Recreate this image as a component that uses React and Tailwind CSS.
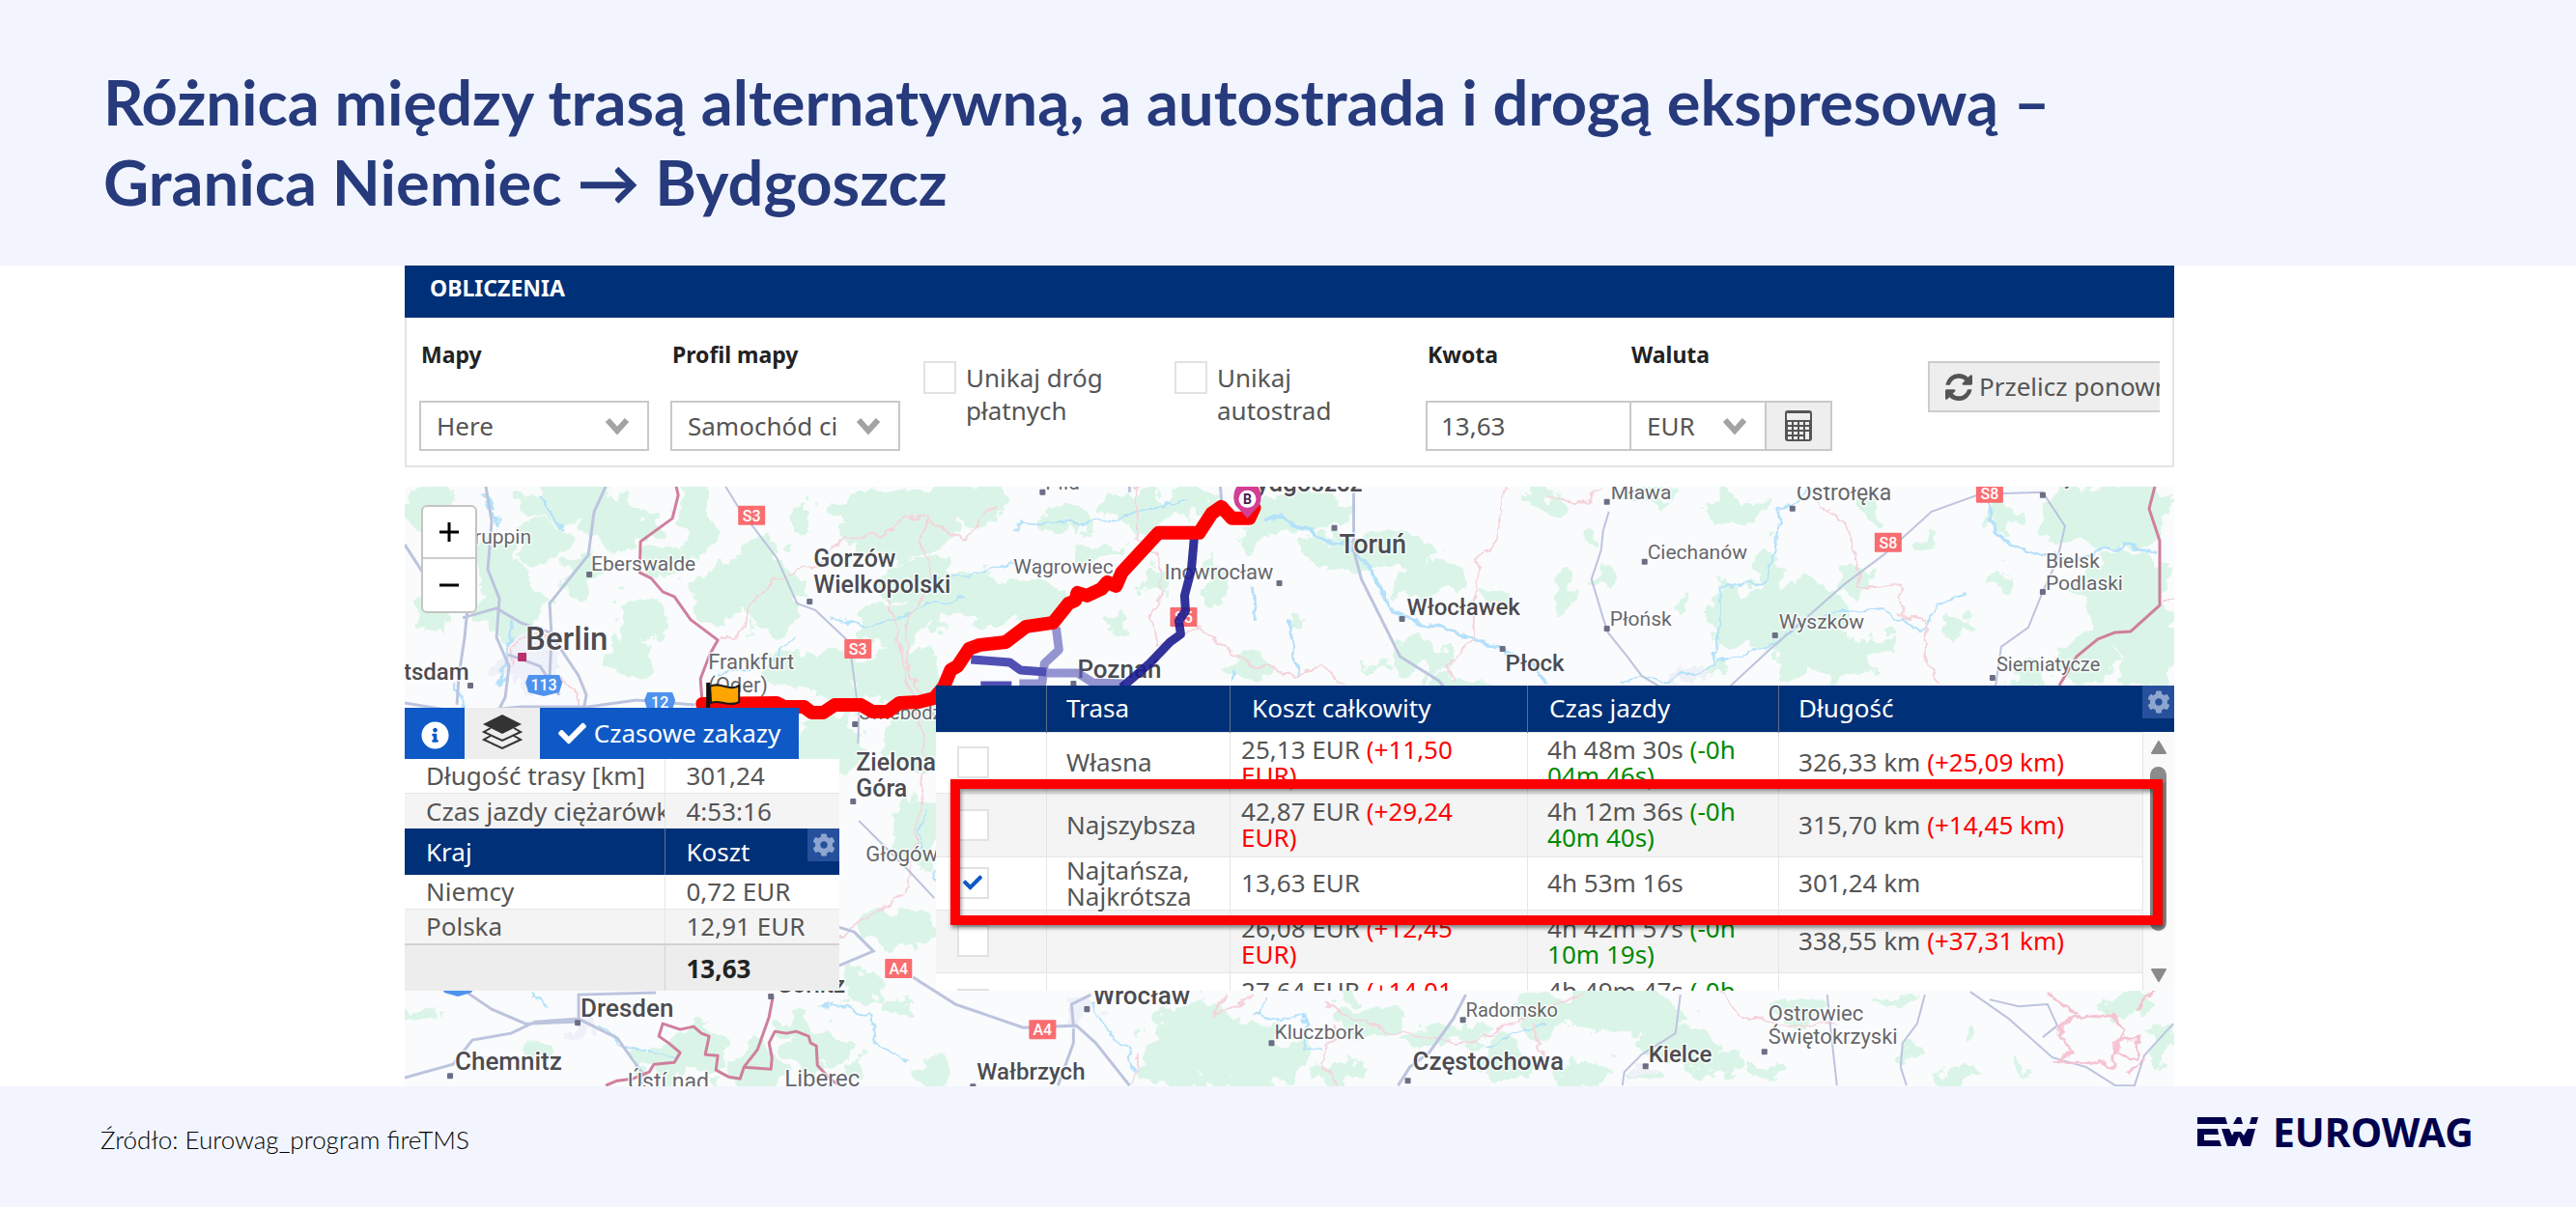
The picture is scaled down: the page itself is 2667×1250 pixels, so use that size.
import React, { useState } from 'react';
import { FaCheck, FaCog, FaInfoCircle } from 'react-icons/fa';

const routes = [
  { id: 'own', name: 'Własna', cost: '25,13 EUR', costDiff: '(+11,50 EUR)', time: '4h 48m 30s', timeDiff: '(-0h 04m 46s)', length: '326,33 km', lengthDiff: '(+25,09 km)', height: 'h-[63px]' },
  { id: 'fastest', name: 'Najszybsza', cost: '42,87 EUR', costDiff: '(+29,24 EUR)', time: '4h 12m 36s', timeDiff: '(-0h 40m 40s)', length: '315,70 km', lengthDiff: '(+14,45 km)', height: 'h-[66px]' },
  { id: 'cheapest', name: 'Najtańsza, Najkrótsza', cost: '13,63 EUR', time: '4h 53m 16s', length: '301,24 km', height: 'h-[54px]' },
  { id: 'alt1', name: '', cost: '26,08 EUR', costDiff: '(+12,45 EUR)', time: '4h 42m 57s', timeDiff: '(-0h 10m 19s)', length: '338,55 km', lengthDiff: '(+37,31 km)', height: 'h-[65px]' },
  { id: 'alt2', name: '', cost: '27,64 EUR', costDiff: '(+14,01 EUR)', time: '4h 49m 47s', timeDiff: '(-0h 03m 29s)', length: '', height: 'h-[66px]' },
];

// x, y of the baseline, font size, text
const bigCities = [
  [545, 673, 33, 'Berlin'],
  [843, 587, 25, 'Gorzów'],
  [843, 614, 25, 'Wielkopolski'],
  [419, 704, 24, 'tsdam'],
  [887, 798, 25, 'Zielona'],
  [887, 825, 25, 'Góra'],
  [602, 1053, 26, 'Dresden'],
  [472, 1108, 26, 'Chemnitz'],
  [805, 1028, 24, 'Görlitz'],
  [1285, 509, 26, 'Bydgoszcz'],
  [1387, 573, 27, 'Toruń'],
  [1457, 637, 24, 'Włocławek'],
  [1559, 695, 24, 'Płock'],
  [1116, 702, 26, 'Poznań'],
  [1132, 1040, 26, 'Wrocław'],
  [1012, 1118, 24, 'Wałbrzych'],
  [1463, 1108, 26, 'Częstochowa'],
  [1707, 1100, 24, 'Kielce'],
];

const smallCities = [
  [492, 563, 21, 'ruppin'],
  [613, 591, 21, 'Eberswalde'],
  [734, 693, 22, 'Frankfurt'],
  [734, 717, 22, '(Oder)'],
  [890, 745, 20, 'Świebodzin'],
  [897, 892, 22, 'Głogów'],
  [651, 1128, 23, 'Ústí nad'],
  [813, 1125, 24, 'Liberec'],
  [1083, 507, 21, 'Piła'],
  [1050, 594, 21, 'Wągrowiec'],
  [1206, 600, 22, 'Inowrocław'],
  [1668, 517, 21, 'Mława'],
  [1860, 518, 23, 'Ostrołęka'],
  [1706, 579, 21, 'Ciechanów'],
  [1667, 648, 21, 'Płońsk'],
  [1842, 651, 21, 'Wyszków'],
  [2118, 588, 21, 'Bielsk'],
  [2118, 611, 21, 'Podlaski'],
  [2067, 695, 20, 'Siemiatycze'],
  [2100, 501, 22, 'Białystok'],
  [1320, 1076, 21, 'Kluczbork'],
  [1518, 1053, 20, 'Radomsko'],
  [1831, 1057, 22, 'Ostrowiec'],
  [1831, 1081, 22, 'Świętokrzyski'],
];

const dots = [
  [611, 595], [839, 623], [488, 710], [886, 750], [884, 830], [599, 1059], [467, 1114], [799, 1032],
  [1080, 510], [1382, 547], [1325, 604], [1452, 641], [1556, 672], [1112, 708], [1664, 520], [1856, 527],
  [1703, 582], [1664, 651], [1838, 658], [2115, 613], [2063, 702], [2115, 513], [1126, 1045], [1317, 1080],
  [1515, 1056], [1458, 1119], [1827, 1089], [1704, 1104], [1008, 1125],
];

const badges = [
  [779, 534, 'S3'], [889, 672, 'S3'], [1226, 639, 'S5'], [1955, 562, 'S8'], [2060, 511, 'S8'],
  [931, 1003, 'A4'], [1080, 1066, 'A4'],
];

// cx, cy, rx, ry
const forests = [
  [450, 530, 34, 26], [530, 620, 34, 40], [560, 560, 34, 22], [585, 520, 50, 18], [640, 545, 40, 24], [665, 640, 34, 24],
  [690, 580, 24, 18], [720, 540, 18, 38], [650, 680, 28, 18], [600, 600, 18, 24], [510, 580, 18, 14], [445, 640, 18, 14],
  [790, 600, 38, 38], [830, 540, 16, 20], [745, 610, 24, 34], [800, 640, 34, 20], [880, 520, 26, 10], [930, 540, 60, 40],
  [1000, 520, 46, 24], [960, 600, 50, 22], [1010, 620, 70, 24], [930, 645, 44, 24], [860, 700, 34, 26], [930, 700, 46, 32],
  [820, 690, 30, 14], [960, 760, 44, 34], [860, 770, 34, 34], [950, 860, 24, 32], [930, 960, 38, 22], [890, 1020, 26, 18],
  [1060, 625, 46, 20], [1100, 540, 26, 10], [1140, 570, 26, 12], [1180, 530, 40, 16], [1230, 520, 34, 16], [1340, 535, 56, 22],
  [1420, 572, 70, 18], [1480, 600, 40, 18], [1260, 600, 8, 30], [1350, 514, 34, 12], [1300, 560, 16, 8], [1470, 680, 36, 18],
  [1510, 710, 34, 14], [1350, 640, 10, 6], [1420, 690, 14, 6], [1550, 620, 14, 8], [1600, 520, 24, 8], [1640, 560, 8, 10],
  [1620, 610, 8, 20], [1160, 650, 12, 8], [1290, 690, 24, 8], [1200, 600, 10, 10], [1700, 516, 30, 8], [1800, 530, 36, 14],
  [1830, 590, 12, 24], [1800, 640, 32, 34], [1860, 640, 56, 38], [1890, 680, 48, 24], [1920, 600, 18, 16], [1940, 530, 14, 16],
  [1990, 560, 8, 10], [2020, 650, 16, 10], [2070, 540, 14, 16], [2165, 535, 52, 32], [2210, 530, 40, 34], [2195, 620, 46, 50],
  [2160, 680, 30, 26], [2225, 680, 34, 34], [2070, 600, 12, 10], [2100, 700, 20, 12], [1940, 670, 20, 8], [1780, 700, 10, 8],
  [1660, 600, 12, 6], [1740, 630, 10, 6], [440, 1050, 16, 8], [560, 1090, 20, 10], [680, 1100, 34, 14], [720, 1085, 34, 22],
  [780, 1110, 36, 20], [850, 1085, 34, 22], [820, 1060, 18, 10], [890, 1110, 14, 12], [930, 1040, 24, 12], [970, 1110, 20, 14],
  [1240, 1080, 54, 40], [1290, 1095, 60, 32], [1220, 1110, 36, 20], [1380, 1110, 24, 12], [1420, 1060, 30, 12], [1400, 1035, 18, 8],
  [1500, 1070, 44, 10], [1560, 1100, 32, 18], [1600, 1050, 28, 24], [1680, 1045, 70, 24], [1740, 1080, 44, 20], [1640, 1110, 28, 18],
  [1780, 1100, 26, 14], [1830, 1110, 24, 8], [1860, 1050, 22, 10], [1700, 1116, 20, 8], [2040, 1065, 8, 12], [2020, 1112, 20, 6],
  [2100, 1110, 6, 12], [2200, 1040, 22, 14], [2240, 1080, 14, 18], [1970, 1090, 10, 6], [1960, 1035, 16, 6],
];

function MapLayer() {
  return (
    <svg
      className="absolute inset-0 h-full w-full"
      viewBox="420 504 1831 621"
      preserveAspectRatio="xMidYMid slice"
      fontFamily="Roboto, 'Noto Sans', sans-serif"
      aria-label="Mapa trasy"
    >
      <defs>
        <filter id="rough" x="-5%" y="-5%" width="110%" height="110%">
          <feTurbulence type="fractalNoise" baseFrequency="0.035" numOctaves="4" seed="7" />
          <feDisplacementMap in="SourceGraphic" scale="48" xChannelSelector="R" yChannelSelector="G" />
        </filter>
        <filter id="wobble" x="-5%" y="-5%" width="110%" height="110%">
          <feTurbulence type="fractalNoise" baseFrequency="0.06" numOctaves="3" seed="3" />
          <feDisplacementMap in="SourceGraphic" scale="14" xChannelSelector="R" yChannelSelector="G" />
        </filter>
      </defs>

      <rect x="420" y="504" width="1831" height="621" fill="#fafbfd" />
      <g fill="#daf5e7" filter="url(#rough)">
        {forests.map(([cx, cy, rx, ry], i) => (
          <ellipse key={i} cx={cx} cy={cy} rx={rx} ry={ry} />
        ))}
      </g>

      {/* built-up areas */}
      <g fill="#eff1f8" filter="url(#rough)">
        <ellipse cx="550" cy="685" rx="32" ry="30" />
        <ellipse cx="1120" cy="1050" rx="18" ry="16" />
        <ellipse cx="610" cy="1065" rx="20" ry="8" />
        <ellipse cx="1750" cy="700" rx="20" ry="10" />
        <ellipse cx="1700" cy="1110" rx="12" ry="10" />
      </g>

      {/* rivers */}
      <g fill="none" stroke="#b4e1fa" strokeWidth="2" filter="url(#wobble)">
        <path d="M744 700L770 692L800 682L824 660M860 640L900 650L950 630L1000 618" />
        <path d="M1050 550L1060 540L1120 545L1180 530L1230 518M960 600L1010 595L1060 580" />
        <path d="M1310 535L1340 540L1368 560L1400 565L1420 590L1435 620L1452 640L1490 650L1510 655L1556 672L1590 690L1600 708" strokeWidth="4" />
        <path d="M1298 608L1300 645M1335 640L1342 680L1344 700M1275 708L1280 695" strokeWidth="3" />
        <path d="M1680 710L1700 700L1730 705L1770 690L1780 660L1782 610L1830 600L1838 570L1842 530L1880 505" />
        <path d="M1775 685L1830 670L1860 650L1900 635L1950 630L1990 655L2010 625L2035 615" />
        <path d="M2060 520L2065 550L2090 570L2150 580L2175 570L2200 565L2235 575" strokeWidth="3" />
        <path d="M500 510L520 545M560 515L585 550M527 700L515 712L530 670L532 640M470 712L485 740" strokeWidth="3" />
        <path d="M550 1030L570 1045M620 1060L650 1085L700 1095M850 1040L900 1050L910 1085L940 1100" />
        <path d="M1130 1040L1150 1070L1170 1085L1172 1110M1310 1032L1300 1050L1330 1060L1350 1050L1352 1085L1370 1090M1540 1085L1600 1060" />
        <path d="M970 990L975 960L970 900M950 880L960 840" />
      </g>

      {/* provinces */}
      <g fill="none" stroke="#f5d3da" strokeWidth="2" filter="url(#wobble)">
        <path d="M530 690L535 665L560 655L580 665M580 700L600 720L600 745" />
        <path d="M745 660L765 660L775 630L800 600L850 585L870 560L925 550L940 535L960 535L955 560L965 600L940 640L940 690L960 730L980 760" />
        <path d="M960 540L1000 560L1030 520M1178 504L1175 560L1200 570L1205 610L1190 640L1200 670L1240 650L1290 685L1340 700L1370 690L1390 710" />
        <path d="M1600 515L1640 520L1660 508M1560 504L1550 560L1530 580L1525 660L1500 690L1505 704" />
        <path d="M1880 520L1910 540L1925 590L1925 610L1965 605L1970 640L1995 640L1995 690L2010 708M2235 620L2250 620" />
        <path d="M920 620L950 740L960 780L950 860L940 920L900 950L870 970" />
        <path d="M1270 1030L1260 1050L1300 1030M1180 1090L1170 1124M1370 1040L1400 1055L1440 1070L1520 1080L1600 1045L1640 1030" />
        <path d="M1780 1020L1800 1050L1840 1060L1900 1060M1385 1060L1370 1100L1385 1124M1590 1060L1600 1100" />
      </g>

      {/* main roads */}
      <g fill="none" stroke="#bcc4de" strokeWidth="3">
        <path d="M504 504L510 540L506 590L518 620L515 660L528 690L524 722L495 780" />
        <path d="M628 504L616 530L610 575L590 600L570 625L572 660L570 700M480 640L515 630L540 645L570 655L600 700L608 720L604 740" />
        <path d="M420 564L440 595L450 620L485 630L482 660L476 700L474 730M527 678L560 690L580 720M420 728L480 738L540 732L610 732L660 725L720 730" />
        <path d="M752 504L765 525L780 545L805 578L826 625L845 632L880 665L890 740L889 770" strokeWidth="2" />
        <path d="M1264 504L1266 530M1402 504L1402 570L1410 600L1430 640L1450 680L1490 705L1496 712" />
        <path d="M1666 530L1660 550L1658 570L1648 600L1660 640L1665 655L1685 680L1700 700L1720 712" strokeWidth="2" />
        <path d="M1790 712L1830 675L1870 640L1910 605L1950 575L2000 530L2050 512L2115 510L2138 545L2130 580L2115 613L2100 650L2072 670L2066 712" strokeWidth="2" />
        <path d="M1170 504L1170 510M960 730L980 760" />
        <path d="M420 1116L470 1102L490 1077L530 1070L555 1058L600 1055L640 1075L665 1110L665 1124M485 1028L510 1045L545 1060L600 1058L600 1030L680 1028" />
        <path d="M869 1000L905 985L885 965L869 960M946 1012L990 1040L1060 1064L1115 1062L1135 1080L1170 1124M1112 1062L1110 1040L1130 1030M1112 1065L1112 1080L1096 1124" />
        <path d="M1518 1030L1505 1055L1480 1090L1460 1105L1448 1124" />
        <path d="M1740 1030L1735 1070L1700 1092L1682 1110L1680 1124M1892 1030L1896 1070L1902 1124M1993 1030L1985 1060L1970 1080L1968 1105L1974 1124M2040 1027L2080 1055L2125 1095L2160 1105L2190 1124L2210 1124L2220 1093L2250 1060M2060 1035L2090 1042L2120 1040L2130 1062L2115 1074" strokeWidth="2" />
        <path d="M890 850L940 900L968 930" strokeWidth="2" />
      </g>

      {/* state borders */}
      <g fill="none" stroke="#cf7f9c" strokeWidth="3" strokeLinejoin="round">
        <path d="M701 504L703 513L697 537L664 561L663 593L675 599L687 613L699 618L716 642L744 663L736 677L726 703L728 730" />
        <path d="M2231 504L2225 527L2236 560L2236 627L2206 654L2190 655L2172 662L2150 680L2132 710" />
        <path d="M801 1032L797 1053L785 1087L771 1105L767 1117L755 1115L742 1108L744 1093L731 1092L735 1073L727 1070L719 1063L705 1066L687 1060L683 1073L693 1080L705 1090L699 1100L678 1102L673 1110L656 1117L640 1119L628 1124" />
        <path d="M771 1105L785 1106L799 1107L800 1095L797 1080L803 1068L815 1070L825 1068L838 1073L840 1080L846 1083L847 1103L860 1117L870 1124" />
      </g>
      <g fill="none" stroke="#f5c3d1" strokeWidth="3" filter="url(#wobble)">
        <path d="M2120 1030L2150 1050L2130 1070L2145 1090L2130 1100L2160 1100L2190 1105L2190 1080L2215 1075L2210 1095L2190 1090L2200 1065L2180 1050L2140 1055M2210 1045L2235 1025M2205 1115L2220 1095" />
      </g>

      {badges.map(([x, y, label]) => (
        <g key={`${x}-${label}`}>
          <rect x={x - 14} y={y - 10} width="28" height="20" rx="1" fill="#f96d70" />
          <text x={x} y={y + 6} fontSize="16" fontWeight="500" fill="#fff" textAnchor="middle">{label}</text>
        </g>
      ))}
      <g fill="#4f92ee">
        <path d="M548 699H580L583 707L580 717L564 721L548 717L545 707Z" />
        <path d="M671 717H697L700 725L697 735L684 739L671 735L668 725Z" />
        <path d="M458 1022H492L489 1028L475 1032L461 1028Z" />
      </g>
      <g fontSize="16" fontWeight="500" fill="#fff" textAnchor="middle">
        <text x="564" y="715">113</text>
        <text x="684" y="733">12</text>
      </g>

      <g fill="#6b6f85">
        {dots.map(([x, y]) => (
          <rect key={`${x}-${y}`} x={x - 3} y={y - 3} width="6" height="6" rx="1" />
        ))}
      </g>
      <rect x="537" y="676" width="9" height="9" rx="1" fill="#b8336a" />

      <g stroke="#fff" strokeWidth="3" strokeOpacity="0.8" paintOrder="stroke" strokeLinejoin="round">
        <g fill="#4c4c52" fontWeight="500">
          {bigCities.map(([x, y, size, name]) => (
            <text key={name} x={x} y={y} fontSize={size}>{name}</text>
          ))}
        </g>
        <g fill="#67676c">
          {smallCities.map(([x, y, size, name]) => (
            <text key={name} x={x} y={y} fontSize={size}>{name}</text>
          ))}
        </g>
      </g>

      {/* calculated routes */}
      <g fill="none" strokeLinejoin="round">
        <path d="M1094 650L1097 673L1082 687L1079 712M1082 697L1116 697L1132 707L1164 708M1056 708H1082" stroke="#5c5cb8" strokeOpacity="0.65" strokeWidth="9" />
        <path d="M1006 683L1046 686L1057 694L1084 696M1016 710H1048" stroke="#5050b4" strokeWidth="9" />
        <path d="M1237 556L1234 590L1227 617L1228 633L1221 643L1223 657L1212 665L1191 687L1162 712" stroke="#1c1c90" strokeOpacity="0.9" strokeWidth="9" />
        <path
          d="M728 729L805 728L813 732L833 732L841 738L853 738L865 730L892 730L904 737L920 737L932 728L952 727L968 723L978 711L985 694L992 690L1004 672L1015 668L1042 665L1063 649L1091 645L1107 625L1114 622L1116 614L1126 617L1141 610L1147 603L1156 607L1162 593L1200 552L1242 552L1255 532L1265 525L1276 537L1294 537L1299 526"
          stroke="#ff0000"
          strokeWidth="14"
          strokeLinecap="round"
        />
      </g>

      {/* start flag */}
      <path d="M736 711C746 705 756 717 766 710V727C756 733 746 724 737 728Z" fill="#ffa500" stroke="#1a1a1a" strokeWidth="2" />
      <path d="M734 707V736" stroke="#111" strokeWidth="4" />

      {/* destination pin */}
      <path d="M1292 537L1280 524C1274 512 1281 498 1292 498C1303 498 1310 512 1304 524Z" fill="#d23f94" />
      <circle cx="1292" cy="517" r="9" fill="#fff" />
      <text x="1292" y="522" fontSize="14" fontWeight="700" fill="#4a1b52" textAnchor="middle">B</text>
    </svg>
  );
}

function Chevron() {
  return (
    <svg viewBox="0 0 26 18" className="pointer-events-none absolute right-5 top-1/2 h-[18px] w-[26px] -translate-y-1/2" aria-hidden="true">
      <path d="M3 3L13 14L23 3" fill="none" stroke="#a3a3a3" strokeWidth="6" />
    </svg>
  );
}

function SelectField({ id, label, options, width, clip }) {
  return (
    <div className={`flex flex-col ${width}`}>
      <label htmlFor={id} className="pl-[2px] text-[23px] leading-8 font-bold text-[#222]">{label}</label>
      <div className="relative mt-8">
        <select id={id} className={`block h-[52px] w-full appearance-none border-2 border-[#c9c9c9] bg-white pl-4 text-[26px] text-[#555] ${clip}`}>
          {options.map((o) => <option key={o}>{o}</option>)}
        </select>
        <Chevron />
      </div>
    </div>
  );
}

function CheckField({ id, label }) {
  return (
    <div className="mt-[23px] flex w-[216px] gap-[10px]">
      <input id={id} type="checkbox" className="h-[34px] w-[34px] shrink-0 appearance-none border-2 border-[#e2e2e2] bg-white" />
      <label htmlFor={id} className="w-[150px] text-[26px] leading-[34px] text-[#555]">{label}</label>
    </div>
  );
}

function CalculatorIcon() {
  return (
    <svg viewBox="0 0 30 34" className="h-[34px] w-[30px]" aria-hidden="true">
      <rect x="1" y="1" width="28" height="32" rx="3" fill="#555" />
      <rect x="3" y="4" width="24" height="7" fill="#eee" />
      {[13, 18, 23, 28].map((y) => (
        <g key={y} fill="#eee">
          <rect x="4" y={y} width="4" height="3" />
          <rect x="10" y={y} width="4" height="3" />
          <rect x="16" y={y} width="4" height="3" />
          {y < 20 && <rect x="22" y={y} width="4" height="3" />}
        </g>
      ))}
      <rect x="22" y="23" width="4" height="8" fill="#eee" />
    </svg>
  );
}

function RefreshIcon() {
  return (
    <svg viewBox="0 0 1536 1536" className="h-7 w-7 shrink-0" fill="currentColor" aria-hidden="true">
      <path d="M1511 928q0 5-1 7-64 268-268 434.500t-478 166.500q-146 0-282.500-55t-243.500-157l-129 129q-19 19-45 19t-45-19-19-45v-448q0-26 19-45t45-19h448q26 0 45 19t19 45-19 45l-137 137q71 66 161 102t187 36q134 0 250-65t186-179q11-17 53-117 8-23 30-23h192q13 0 22.500 9.500t9.500 22.500zM1536 128v448q0 26-19 45t-45 19h-448q-26 0-45-19t-19-45 19-45l138-138q-148-137-349-137-134 0-250 65t-186 179q-11 17-53 117-8 23-30 23h-199q-13 0-22.500-9.500t-9.500-22.500v-7q65-268 270-434.500t480-166.500q146 0 284 55.500t245 156.500l130-129q19-19 45-19t45 19 19 45z" />
    </svg>
  );
}

function CalculationForm() {
  const [amount, setAmount] = useState('13,63');
  return (
    <form className="flex h-[155px] overflow-hidden border-2 border-t-0 border-[#e4e4e4] pt-[22px] pr-[13px] pl-[13px]">
      <div className="flex gap-[22px]">
        <SelectField id="maps" label="Mapy" options={['Here']} width="w-[238px]" clip="pr-12" />
        <SelectField id="profile" label="Profil mapy" options={['Samochód ciężarowy']} width="w-[238px]" clip="pr-16" />
      </div>
      <div className="ml-6 flex gap-11">
        <CheckField id="tolls" label="Unikaj dróg płatnych" />
        <CheckField id="motorways" label="Unikaj autostrad" />
      </div>
      <div className="ml-11 flex">
        <div className="w-[213px]">
          <label htmlFor="amount" className="block pl-[2px] text-[23px] leading-8 font-bold text-[#222]">Kwota</label>
          <input
            id="amount"
            value={amount}
            onChange={(e) => setAmount(e.target.value)}
            className="mt-8 block h-[52px] w-full border-2 border-[#c9c9c9] bg-white pl-[14px] text-[26px] text-[#555]"
          />
        </div>
        <div className="w-[140px]">
          <label htmlFor="currency" className="block text-[23px] leading-8 font-bold text-[#222]">Waluta</label>
          <div className="relative mt-8">
            <select id="currency" className="block h-[52px] w-full appearance-none border-2 border-l-0 border-[#c9c9c9] bg-white pl-4 text-[26px] text-[#555]">
              <option>EUR</option>
            </select>
            <Chevron />
          </div>
        </div>
        <button type="button" aria-label="Kalkulator" className="mt-16 flex h-[52px] w-[68px] items-center justify-center border-2 border-l-0 border-[#c9c9c9] bg-[#eee]">
          <CalculatorIcon />
        </button>
      </div>
      <div className="ml-auto w-[240px] overflow-hidden">
        <button type="button" className="mt-[23px] flex h-[53px] w-[270px] items-center gap-[7px] border-2 border-[#ccc] bg-[#eee] pl-4 text-[26px] whitespace-nowrap text-[#555]">
          <RefreshIcon />
          Przelicz ponownie
        </button>
      </div>
    </form>
  );
}

function GearButton() {
  return (
    <button type="button" aria-label="Ustawienia tabeli" className="flex h-[34px] w-[33px] items-center justify-center bg-[#26509c] text-[#8ea6cf]">
      <FaCog size={24} />
    </button>
  );
}

function SummaryPanel() {
  return (
    <div className="w-[450px] shrink-0 text-[26px] text-[#555]">
      <div className="flex h-[53px]">
        <button type="button" aria-label="Informacje" className="flex w-[62px] items-center justify-center bg-[#0f59c6] pt-1 text-white">
          <FaInfoCircle size={29} />
        </button>
        <button type="button" aria-label="Warstwy" className="flex w-[78px] items-center justify-center bg-[#eee] pb-1">
          <svg viewBox="0 0 42 38" className="h-[38px] w-[42px]">
            <path d="M21 1L41 11L21 21L1 11Z" fill="#333" />
            <path d="M9 15L2 19L21 28L40 19L33 15M9 23L2 27L21 36L40 27L33 23" fill="none" stroke="#333" strokeWidth="2" />
          </svg>
        </button>
        <button type="button" className="flex w-[268px] items-center justify-center gap-2 bg-[#0f59c6] text-white">
          <FaCheck size={29} />
          Czasowe zakazy
        </button>
      </div>
      <table className="w-full table-fixed border-collapse leading-8 whitespace-nowrap">
        <colgroup>
          <col className="w-[269px]" />
          <col />
        </colgroup>
        <tbody>
          <tr className="h-[35px] border-b border-[#e6e6e6] bg-white">
            <td className="overflow-hidden border-r border-[#e6e6e6] p-0 pl-[22px]">Długość trasy [km]</td>
            <td className="p-0 pl-[22px]">301,24</td>
          </tr>
          <tr className="h-[37px] bg-[#f4f4f4]">
            <td className="overflow-hidden border-r border-[#e6e6e6] p-0 pl-[22px]">Czas jazdy ciężarówką</td>
            <td className="p-0 pl-[22px]">4:53:16</td>
          </tr>
        </tbody>
      </table>
      <table className="w-full table-fixed border-collapse leading-8 whitespace-nowrap">
        <colgroup>
          <col className="w-[269px]" />
          <col />
        </colgroup>
        <thead>
          <tr className="h-12 bg-[#003077] text-left text-white">
            <th className="border-r border-[#5f6f8d] p-0 pl-[22px] font-normal">Kraj</th>
            <th className="relative p-0 pl-[22px] font-normal">
              Koszt
              <span className="absolute top-0 right-0"><GearButton /></span>
            </th>
          </tr>
        </thead>
        <tbody>
          <tr className="h-[35px] border-b border-[#e6e6e6] bg-white">
            <td className="border-r border-[#e6e6e6] p-0 pl-[22px]">Niemcy</td>
            <td className="p-0 pl-[22px]">0,72 EUR</td>
          </tr>
          <tr className="h-[37px] bg-[#f4f4f4]">
            <td className="border-r border-[#e6e6e6] p-0 pl-[22px]">Polska</td>
            <td className="p-0 pl-[22px]">12,91 EUR</td>
          </tr>
        </tbody>
        <tfoot>
          <tr className="h-12 border-t-2 border-[#d2d2d2] bg-[#ededed]">
            <td className="border-r border-[#d2d2d2] p-0" />
            <td className="p-0 pl-[22px] font-bold text-[#222]">13,63</td>
          </tr>
        </tfoot>
      </table>
    </div>
  );
}

function RoutesPanel() {
  const [selected, setSelected] = useState('cheapest');
  return (
    <div className="relative w-[70%]">
      <div className="h-[316px] overflow-hidden bg-[#fafafa]">
        <table className="w-full table-fixed border-collapse text-[26px] leading-[27px] text-[#555]">
          <colgroup>
            <col className="w-[115px]" />
            <col className="w-[190px]" />
            <col className="w-[308px]" />
            <col className="w-[260px]" />
            <col />
            <col className="w-[33px]" />
          </colgroup>
          <thead>
            <tr className="h-12 bg-[#003077] text-left text-white">
              <th className="border-r border-[#5f6f8d] p-0" aria-label="Wybór" />
              <th className="border-r border-[#5f6f8d] p-0 pl-5 font-normal">Trasa</th>
              <th className="border-r border-[#5f6f8d] p-0 pl-[22px] font-normal">Koszt całkowity</th>
              <th className="border-r border-[#5f6f8d] p-0 pl-[22px] font-normal">Czas jazdy</th>
              <th className="p-0 pl-5 font-normal">Długość</th>
              <th className="p-0 align-top"><GearButton /></th>
            </tr>
          </thead>
          <tbody>
            {routes.map((route, i) => (
              <tr key={route.id} className={`${route.height} ${i % 2 ? 'bg-[#f4f4f4]' : 'bg-white'}`}>
                <td className="border border-l-0 border-[#e6e6e6] p-0 pl-[22px]">
                  <span className="relative block h-[33px] w-[33px]">
                    <input
                      type="checkbox"
                      aria-label={route.name || route.length || route.cost}
                      checked={selected === route.id}
                      onChange={() => setSelected(route.id)}
                      className="block h-[33px] w-[33px] appearance-none border-2 border-[#e2e2e2] bg-white"
                    />
                    {selected === route.id && (
                      <FaCheck size={20} className="pointer-events-none absolute top-[6px] left-[6px] text-[#0f59c6]" />
                    )}
                  </span>
                </td>
                <td className="border border-[#e6e6e6] p-0 pl-5">{route.name}</td>
                <td className="border border-[#e6e6e6] p-0 pr-16 pl-[11px]">
                  {route.cost} <span className="text-[#ff0000]">{route.costDiff}</span>
                </td>
                <td className="border border-[#e6e6e6] p-0 pr-8 pl-5">
                  {route.time} <span className="text-[#008a00]">{route.timeDiff}</span>
                </td>
                <td className="border border-[#e6e6e6] p-0 pl-5">
                  {route.length} <span className="text-[#ff0000]">{route.lengthDiff}</span>
                </td>
                <td className="bg-[#fafafa] p-0" />
              </tr>
            ))}
          </tbody>
        </table>
      </div>

      {/* scroll bar of the list */}
      <div className="absolute top-12 right-0 flex h-[268px] w-[33px] flex-col items-center pt-2 pb-2" aria-hidden="true">
        <svg viewBox="0 0 18 16" className="h-4 w-[18px]"><path d="M9 2L16 14H2Z" fill="#8b8b8b" stroke="#8b8b8b" strokeWidth="2" strokeLinejoin="round" /></svg>
        <div className="mt-3 h-[170px] w-[17px] rounded-full bg-[#8b8b8b]" />
        <svg viewBox="0 0 18 16" className="mt-auto h-4 w-[18px]"><path d="M9 14L2 2H16Z" fill="#8b8b8b" stroke="#8b8b8b" strokeWidth="2" strokeLinejoin="round" /></svg>
      </div>

      {/* highlighted rows */}
      <div className="pointer-events-none absolute top-[97px] right-3 left-[15px] h-[151px] border-10 border-[#ff0000] shadow-[1px_3px_4px_rgba(0,0,0,0.45),inset_1px_3px_4px_rgba(0,0,0,0.45)]" />
    </div>
  );
}

function Logo() {
  return (
    <div className="flex items-center gap-[15px] text-[#00004d]">
      <svg viewBox="0 0 63 30" className="h-[30px] w-[63px]" fill="currentColor" aria-hidden="true">
        <path d="M0 0H29L31 7H0Z" />
        <path d="M41 0H45L47 7H37Z" />
        <path d="M56 0H63L61 7H54Z" />
        <path d="M0 12H21L22 18H7V24H23L25 30H0Z" />
        <path d="M25 12H33L36 19L38 15H45L48 19L52 12H60L55 30H47L43 20L39 30H31Z" />
      </svg>
      <span className="text-[41px] leading-[42px] font-bold">EUROWAG</span>
    </div>
  );
}

export default function App() {
  return (
    <div className="min-h-screen bg-white font-['Noto_Sans','Open_Sans',sans-serif]">
      <header className="h-[275px] bg-[#f2f5fd] px-[107px] pt-16">
        <h1 className="max-w-[2100px] font-['Lato','Noto_Sans',sans-serif] text-[65px] leading-[83px] font-bold text-[#263a7c]">
          Różnica między trasą alternatywną, a autostrada i drogą ekspresową – Granica Niemiec → Bydgoszcz
        </h1>
      </header>

      <main className="pr-104 pl-[419px]">
        <h2 className="h-[54px] bg-[#003077] pl-[26px] text-[23px] leading-[46px] font-bold text-white">OBLICZENIA</h2>
        <CalculationForm />
        <section className="relative mt-5 flex h-[621px] items-end justify-between overflow-hidden pb-[99px]">
          <MapLayer />
          <div className="absolute top-[19px] left-[17px] flex w-[58px] flex-col rounded-md border-2 border-[#c4c4c4] bg-white">
            <button type="button" aria-label="Przybliż" className="flex h-[54px] items-center justify-center border-b-2 border-[#ccc]">
              <svg viewBox="0 0 22 22" className="h-[22px] w-[22px]"><path d="M11 1V21M1 11H21" stroke="#000" strokeWidth="3" /></svg>
            </button>
            <button type="button" aria-label="Oddal" className="flex h-[54px] items-center justify-center">
              <svg viewBox="0 0 22 22" className="h-[22px] w-[22px]"><path d="M1 11H21" stroke="#000" strokeWidth="3" /></svg>
            </button>
          </div>
          <div className="relative flex w-full items-end justify-between">
            <SummaryPanel />
            <RoutesPanel />
          </div>
        </section>
      </main>

      <footer className="flex h-[125px] items-start justify-between bg-[#f2f5fd] pt-[26px] pr-[106px] pl-[104px]">
        <p className="pt-3 font-['Lato','Noto_Sans',sans-serif] text-[26px] leading-[34px] font-light text-black">Źródło: Eurowag_program fireTMS</p>
        <Logo />
      </footer>
    </div>
  );
}
